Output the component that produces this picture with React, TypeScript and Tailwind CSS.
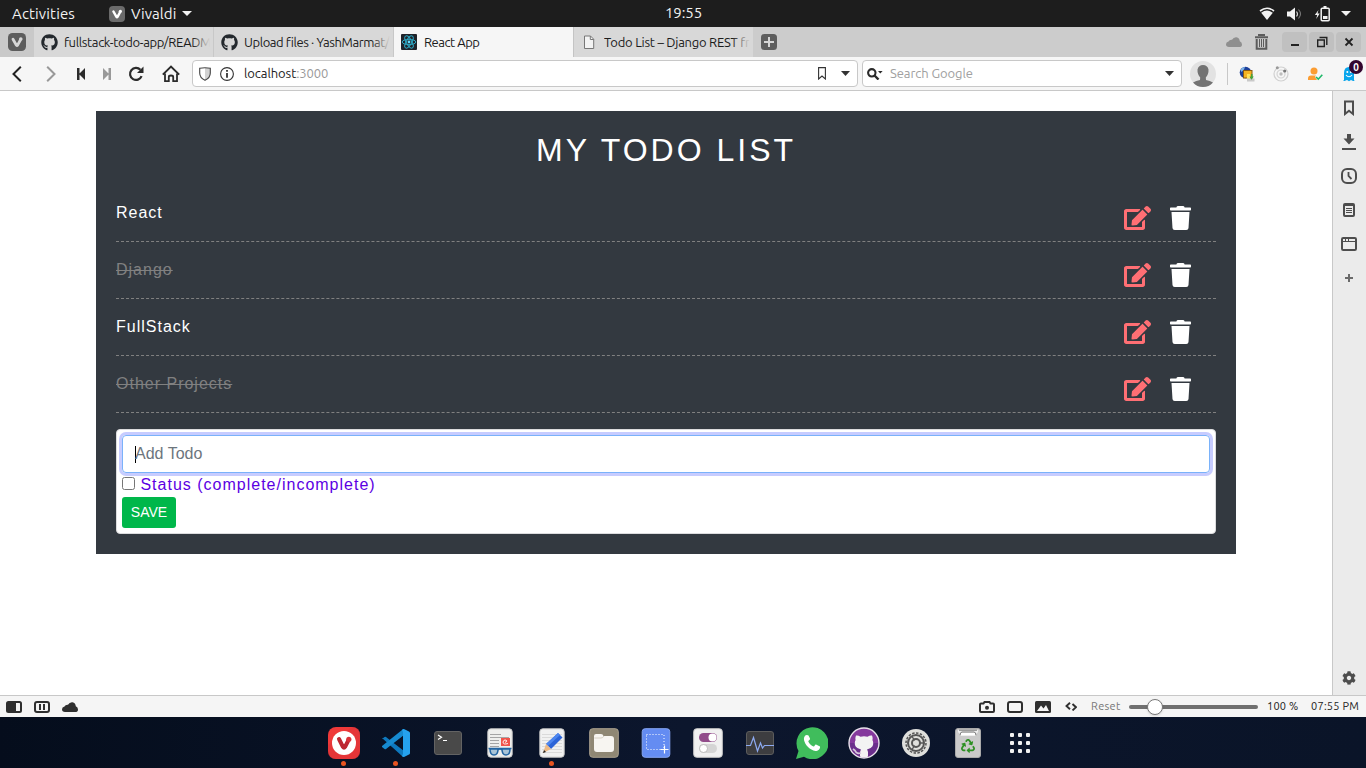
import React, { useState } from "react";
import { FaEdit, FaTrash, FaGithub, FaRecycle, FaCog } from "react-icons/fa";

type IconProps = { w: number; h: number; className?: string; children: React.ReactNode };

function Svg({ w, h, className = "", children }: IconProps) {
  return (
    <svg width={w} height={h} viewBox={`0 0 ${w} ${h}`} fill="none" className={`block shrink-0 ${className}`}>
      {children}
    </svg>
  );
}

function Cell({ className = "w-[34px]", children }: { className?: string; children: React.ReactNode }) {
  return <div className={`flex shrink-0 items-center justify-center ${className}`}>{children}</div>;
}

function VivaldiMark({ size, bg, fg }: { size: number; bg: string; fg: string }) {
  return (
    <svg width={size} height={size} viewBox="0 0 18 18" className="block shrink-0">
      <rect width="18" height="18" rx="4.5" fill={bg} />
      <path d="M5 6.2 L8.4 12.2 Q9 13 9.6 12.2 L12.4 7" stroke={fg} strokeWidth="2.8" strokeLinecap="round" strokeLinejoin="round" fill="none" />
      <circle cx="12.8" cy="6" r="1.8" fill={fg} />
    </svg>
  );
}

function Caret({ w = 9, h = 5, color = "#333" }: { w?: number; h?: number; color?: string }) {
  return (
    <Svg w={w} h={h}>
      <path d={`M0 0H${w}L${w / 2} ${h}Z`} fill={color} />
    </Svg>
  );
}

function TopBar() {
  return (
    <header className="flex h-[27px] items-center bg-[#1d1d1d] text-[15px] text-[#f2f2f2]">
      <div className="w-[109px] pt-px pl-3 tracking-[0.15px]">Activities</div>
      <VivaldiMark size={16} bg="#6b6b6b" fg="#fff" />
      <span className="ml-1.5 w-[46px] pt-px tracking-[0.05px]">Vivaldi</span>
      <span className="ml-[5px]"><Caret w={10} h={5} color="#f2f2f2" /></span>
      <div className="ml-[473px] w-[40px] tracking-[-0.1px]">19:55</div>
      <div className="ml-auto flex items-center">
        <Svg w={16} h={14} className="mr-[12px]">
          <path d="M1 4Q8-1.5 15 4" stroke="#f2f2f2" strokeWidth="1.6" />
          <path d="M2.2 5.7Q8 1.5 13.8 5.7L8 13Z" fill="#f2f2f2" />
        </Svg>
        <Svg w={16} h={14} className="mr-[12px]">
          <path d="M0 4.5H3L8 .5V13.5L3 9.5H0Z" fill="#f2f2f2" />
          <path d="M9.5 4.5Q11.5 7 9.5 9.5" stroke="#d0d0d0" strokeWidth="1.2" />
          <path d="M11.5 2.5Q15.5 7 11.5 11.5" stroke="#777" strokeWidth="1.1" />
        </Svg>
        <Svg w={16} h={16} className="mr-[10px]">
          <path d="M3.5 4L-.2 9H2.2L1.2 13L4.7 7.5H2.5Z" fill="#f2f2f2" />
          <path d="M8.5 1h3" stroke="#f2f2f2" strokeWidth="2" />
          <rect x="6.2" y="2.2" width="8" height="12.5" rx="1" stroke="#f2f2f2" strokeWidth="1.5" />
          <rect x="8" y="10" width="4.5" height="3" fill="#f2f2f2" />
        </Svg>
        <span className="mr-[15px]"><Caret w={10} h={5} color="#f2f2f2" /></span>
      </div>
    </header>
  );
}

function ReactFavicon() {
  return (
    <Svg w={16} h={16}>
      <rect width="16" height="16" rx="1" fill="#20232a" />
      <g stroke="#2da8c4" strokeWidth="1">
        <ellipse cx="8" cy="8" rx="6.8" ry="2.7" />
        <ellipse cx="8" cy="8" rx="6.8" ry="2.7" transform="rotate(60 8 8)" />
        <ellipse cx="8" cy="8" rx="6.8" ry="2.7" transform="rotate(120 8 8)" />
      </g>
      <circle cx="8" cy="8" r="1.4" fill="#61dafb" />
    </Svg>
  );
}

function PageFavicon() {
  return (
    <Svg w={16} h={16}>
      <path d="M3.5 2H9.5L12.7 5.2V14.5H3.5Z" fill="#f3f3f3" stroke="#777" />
      <path d="M9.3 2V5.5H12.7" stroke="#777" />
    </Svg>
  );
}

const tabs = [
  { icon: <FaGithub size={17} color="#24292e" />, title: "fullstack-todo-app/README", tone: "w-[180px] bg-[#d8d8d8] border-r border-[#c8c8c8]", text: "tracking-[-0.35px]", fade: "from-[#d8d8d800] to-[#d8d8d8]" },
  { icon: <FaGithub size={17} color="#24292e" />, title: "Upload files · YashMarmat/", tone: "w-[180px] bg-[#d8d8d8] border-r border-[#c8c8c8]", text: "tracking-[-0.42px]", fade: "from-[#d8d8d800] to-[#d8d8d8]" },
  { icon: <ReactFavicon />, title: "React App", tone: "w-[179px] bg-[#f6f6f6]", text: "tracking-[-0.48px]", fade: "" },
  { icon: <PageFavicon />, title: "Todo List – Django REST fra", tone: "w-[180px] bg-[#d8d8d8] border-l border-[#c4c4c4]", text: "tracking-[-0.25px]", fade: "from-[#d8d8d800] to-[#d8d8d8]" },
];

function TabBar() {
  return (
    <div className="flex h-[30px] items-center bg-[#ccc]">
      <Cell className="h-full w-[34px] bg-[#c9c9c9]">
        <VivaldiMark size={18} bg="#5d5d5d" fg="#d6d6d6" />
      </Cell>
      {tabs.map((t) => (
        <div key={t.title} className={`flex h-full shrink-0 items-center overflow-hidden pl-[7px] ${t.tone}`}>
          <div className="flex w-[17px] shrink-0">{t.icon}</div>
          <div className="relative ml-[6px] w-[146px] overflow-hidden">
            <div className={`text-[13px] leading-[18px] whitespace-nowrap text-[#1c1c1c] ${t.text}`}>{t.title}</div>
            {t.fade && <div className={`absolute inset-y-0 right-0 w-[18px] bg-linear-to-r ${t.fade}`} />}
          </div>
        </div>
      ))}
      <Svg w={16} h={16} className="ml-[8px]">
        <rect width="16" height="16" rx="3.5" fill="#5e5e5e" />
        <path d="M8 3V13M3 8H13" stroke="#d6d6d6" strokeWidth="2" />
      </Svg>
      <div className="ml-auto flex items-center">
        <Svg w={16} h={10} className="mr-[13px]">
          <path d="M3 10Q0 10 0 7.3 0 5 2.5 4.6 3.5 2.5 6 2.8 7.5 0 10.5.3 13.5 1 13.8 4.3 16 5 16 7.4 16 10 13 10Z" fill="#8f8f8f" />
        </Svg>
        <Svg w={13} h={16} className="mr-[14px]">
          <path d="M4 2V1H9V2M0 3.2H13" stroke="#5c5c5c" strokeWidth="2" />
          <path d="M1.7 5V14.8H11.3V5" stroke="#5c5c5c" strokeWidth="2" />
          <path d="M4.5 5V13M6.5 5V13M8.5 5V13" stroke="#5c5c5c" strokeWidth="1" />
        </Svg>
        <div className="mr-[5px] flex gap-[2px]">
          {["min", "restore", "close"].map((k) => (
            <div key={k} className="flex h-5 w-[25px] items-center justify-center rounded-[4px] bg-[#c0c0c0]">
              <Svg w={12} h={12}>
                {k === "min" && <path d="M2 9H10" stroke="#222" strokeWidth="2" />}
                {k === "restore" && <path d="M1.7 4H8.3V10.5H1.7ZM3.5 1.5H10.8V9" stroke="#222" strokeWidth="1.4" />}
                {k === "close" && <path d="M2.5 2.5L9.5 9.5M9.5 2.5L2.5 9.5" stroke="#222" strokeWidth="1.8" />}
              </Svg>
            </div>
          ))}
        </div>
      </div>
    </div>
  );
}

function AddressBar() {
  return (
    <div className="flex h-[34px] items-center border-b border-[#c8c8c8] bg-[#f6f6f6]">
      <Cell>
        <Svg w={10} h={16}><path d="M8.8 .8L1.5 8L8.8 15.2" stroke="#222" strokeWidth="2" /></Svg>
      </Cell>
      <Cell>
        <Svg w={10} h={16}><path d="M1.2 .8L8.5 8L1.2 15.2" stroke="#999" strokeWidth="2" /></Svg>
      </Cell>
      <Cell className="w-[26px]">
        <Svg w={8} h={12}><path d="M0 0H2.5V12H0ZM8 0V12L2 6Z" fill="#2b2b2b" /></Svg>
      </Cell>
      <Cell className="w-[26px]">
        <Svg w={8} h={12}><path d="M8 0H5.5V12H8ZM0 0V12L6 6Z" fill="#999" /></Svg>
      </Cell>
      <Cell className="w-[34px] pr-[2px]">
        <Svg w={16} h={16}>
          <path d="M12.4 3.8A6 6 0 1 0 13.6 10.2" stroke="#2b2b2b" strokeWidth="2.2" />
          <path d="M15.5 .5V7H9Z" fill="#2b2b2b" />
        </Svg>
      </Cell>
      <Cell>
        <Svg w={18} h={18}>
          <path d="M.8 9.6L9 1.6L17.2 9.6" stroke="#2b2b2b" strokeWidth="2" />
          <path d="M3 8.5V16.2H6.8V12Q6.8 10.5 9 10.5Q11.2 10.5 11.2 12V16.2H15V8.5" stroke="#2b2b2b" strokeWidth="1.8" />
        </Svg>
      </Cell>
      <div className="ml-1 flex h-[27px] w-[666px] items-center rounded-[4px] border border-[#c8c8c8] bg-white pl-[6px]">
        <Svg w={12} h={14}>
          <path d="M6 1V13Q11 10.5 11.2 6.5V1.5Z" fill="#d2d2d2" />
          <path d="M.7 1.2Q6 .3 11.3 1.2V6Q11.3 10.8 6 13.3Q.7 10.8.7 6Z" stroke="#444" strokeWidth="1.1" />
        </Svg>
        <Svg w={14} h={14} className="ml-[9px]">
          <circle cx="7" cy="7" r="6.4" stroke="#333" strokeWidth="1.1" />
          <path d="M7 6V10.7M7 3V4.8" stroke="#333" strokeWidth="1.8" />
        </Svg>
        <div className="ml-[10px] pt-px text-[13px] tracking-[-0.08px] text-[#1c1c1c]">
          localhost<span className="text-[#999]">:3000</span>
        </div>
        <Svg w={8} h={13} className="mr-[15px] ml-auto">
          <path d="M.6 .6H7.4V12L4 9L.6 12Z" stroke="#333" strokeWidth="1.1" />
        </Svg>
        <span className="mr-[7px]"><Caret /></span>
      </div>
      <div className="ml-1 flex h-[27px] w-[320px] items-center rounded-[4px] border border-[#c8c8c8] bg-white pl-[4px]">
        <Svg w={16} h={12}>
          <circle cx="4.8" cy="4.8" r="3.7" stroke="#2b2b2b" strokeWidth="2.1" />
          <path d="M7.5 7.5L11.5 11.5" stroke="#2b2b2b" strokeWidth="2.4" />
          <path d="M11 3H15.6L13.3 5.6Z" fill="#2b2b2b" />
        </Svg>
        <span className="ml-[7px] pt-px text-[13px] tracking-[-0.08px] text-[#a0a0a0]">Search Google</span>
        <span className="mr-[7px] ml-auto"><Caret /></span>
      </div>
      <Svg w={26} h={26} className="ml-2">
        <circle cx="13" cy="13" r="13" fill="#e2e2e2" />
        <path d="M3 21.5Q6 19.5 10 19L10.2 16.5Q7.2 13 7.5 8.5Q8.5 4 13 4Q17.5 4 18.5 8.5Q18.8 13 15.8 16.5L16 19Q20 19.5 23 21.5Q19 26 13 26Q7 26 3 21.5Z" fill="#737373" />
      </Svg>
      <div className="mr-[2px] ml-[11px] h-[22px] w-px bg-[#c8c8c8]" />
      <Cell>
        <Svg w={16} h={16}>
          <circle cx="6.5" cy="6.5" r="5.8" fill="#1d3f99" />
          <path d="M1.5 4Q3 1 6 1L5 3.5L2.5 6Z" fill="#7eb4e8" />
          <rect x="4.5" y="4.5" width="8.5" height="7.5" fill="#f5b324" stroke="#8a5b12" />
          <path d="M8 8H11V14H8Z" fill="#ffe15c" />
          <path d="M8 12.5H15.5V15.5H8Z" fill="#c9c9c9" />
          <path d="M12 8V10.5H10.5L12.5 13.8L14.8 10.5H13.5V8Z" fill="#46a53c" />
        </Svg>
      </Cell>
      <Cell>
        <Svg w={16} h={16}>
          <circle cx="8" cy="8" r="7" stroke="#d0d0d0" strokeWidth="1.2" />
          <circle cx="8" cy="8" r="4" stroke="#d4d4d4" strokeWidth="1.2" />
          <circle cx="8" cy="8" r="1.7" fill="#bdbdbd" />
          <circle cx="11.7" cy="5" r="1.6" fill="#777" /><circle cx="4.3" cy="1.8" r="1.5" fill="#999" />
        </Svg>
      </Cell>
      <Cell>
        <Svg w={16} h={14}>
          <circle cx="7" cy="4" r="3.5" fill="#fb9d32" />
          <path d="M1 13V11.5Q1 8.5 4 8.5H9L8 10L10 13Z" fill="#fb9d32" />
          <path d="M9 10L11.3 12.2L15.3 7.7" stroke="#1eb868" strokeWidth="1.6" />
        </Svg>
      </Cell>
      <Cell className="relative h-full w-[34px]">
        <Svg w={14} h={16}>
          <path d="M2 14V7Q2 1 7 1Q12 1 12 7V14Q13.5 15 11 15L9 14L7 15.3L5 14L2.5 15Q.3 15 2 14Z" fill="#08a5ec" />
          <circle cx="5.3" cy="6" r="1" fill="#fff" /><circle cx="8.8" cy="6" r="1" fill="#fff" />
          <path d="M4 9Q7 12.4 10 9" stroke="#fff" strokeWidth="1.1" />
        </Svg>
        <div className="absolute top-[3px] left-[17px] flex size-[14px] items-center justify-center rounded-full bg-[#33062f] text-[10px] font-bold text-white">0</div>
      </Cell>
    </div>
  );
}

const todos = [
  { title: "React", done: false },
  { title: "Django", done: true },
  { title: "FullStack", done: false },
  { title: "Other Projects", done: true },
];

function TodoApp() {
  const [checked, setChecked] = useState(false);
  return (
    <main className="min-w-0 flex-1 bg-white pt-5 pl-24 font-['Liberation_Sans',Arial,sans-serif]">
      <section className="h-[443px] w-[1140px] bg-[#333940] px-5 pt-5 text-white">
        <h1 className="mb-4 text-center text-[32px] leading-[38px] tracking-[3px]">MY TODO LIST</h1>
        {todos.map((t) => (
          <div key={t.title} className="flex h-[57px] items-start border-b border-dashed border-[#808080]">
            <span className={`mt-4 text-[16px] leading-6 tracking-[1px] ${t.done ? "text-[#808080] line-through" : ""}`}>{t.title}</span>
            <FaEdit className="mt-[21px] ml-auto h-6 w-[27px] text-[#ff6f74]" />
            <FaTrash className="mt-[21px] mr-[25px] ml-[19px] h-6 w-[21px]" />
          </div>
        ))}
        <form className="mt-4 h-[105px] rounded-[4px] border border-[#dcdcde] bg-white p-[5px]" onSubmit={(e) => e.preventDefault()}>
          <div className="flex h-[38px] items-center rounded-[4px] border border-[#7ab2fa] pl-[12px] shadow-[0_0_0_3px_#c7ccff]">
            <div className="h-[17px] w-px bg-black" />
            <span className="-ml-px text-[16px] text-[#6c757d]">Add Todo</span>
          </div>
          <label className="flex h-6 items-center text-[16px] leading-6 tracking-[1px] text-[#5b00e3]">
            <input type="checkbox" checked={checked} onChange={() => setChecked(!checked)} className="mr-[5.45px] mb-[3px] size-[13px]" />
            Status (complete/incomplete)
          </label>
          <button className="block h-[31px] w-[54px] rounded-[3px] bg-[#00b74a] text-[14px] text-white">SAVE</button>
        </form>
      </section>
    </main>
  );
}

function SidePanel() {
  return (
    <aside className="flex w-[34px] shrink-0 flex-col border-l border-[#c8c8c8] bg-[#ebebeb] pr-px">
      <Cell className="h-[34px]">
        <Svg w={12} h={16}><path d="M2 1.5H10V14L6 10.8L2 14Z" stroke="#4d4d4d" strokeWidth="2" /></Svg>
      </Cell>
      <Cell className="h-[34px]">
        <Svg w={14} h={16}><path d="M5 0H9V4.5H12.5L7 10.5L1.5 4.5H5ZM0 14H14V16H0Z" fill="#4d4d4d" /></Svg>
      </Cell>
      <Cell className="h-[34px]">
        <Svg w={16} h={16}>
          <rect x="1" y="1" width="14" height="14" rx="5" stroke="#4d4d4d" strokeWidth="2" />
          <path d="M7.5 4V8L10.5 11" stroke="#4d4d4d" strokeWidth="1.8" />
        </Svg>
      </Cell>
      <Cell className="h-[34px]">
        <Svg w={12} h={14}>
          <rect x="1" y="1" width="10" height="12" rx="1" stroke="#4d4d4d" strokeWidth="2" />
          <path d="M2 1.5H10" stroke="#4d4d4d" strokeWidth="3" />
          <path d="M3 5.5H9M3 7.5H9M3 9.5H9" stroke="#4d4d4d" />
        </Svg>
      </Cell>
      <Cell className="h-[34px]">
        <Svg w={16} h={14}>
          <rect x="1" y="1" width="14" height="12" rx="1.2" stroke="#4d4d4d" strokeWidth="2" />
          <path d="M1 4.5H15M4.5 1V4M7.5 1V4" stroke="#4d4d4d" strokeWidth="1" />
        </Svg>
      </Cell>
      <Cell className="h-[34px]">
        <Svg w={8} h={8}><path d="M4 0V8M0 4H8" stroke="#6a6a6a" strokeWidth="2" /></Svg>
      </Cell>
      <Cell className="mt-auto h-[34px]"><FaCog size={14} color="#4d4d4d" /></Cell>
    </aside>
  );
}

function StatusBar() {
  return (
    <div className="flex h-[22px] items-center border-t border-[#c8c8c8] bg-[#f5f5f5] text-[11px] text-[#222]">
      <Cell className="w-[28px]">
        <Svg w={16} h={12}><rect x="1" y="1" width="14" height="10" rx="1.5" stroke="#2f2f2f" strokeWidth="2" /><path d="M1 1H10V11H1Z" fill="#2f2f2f" /></Svg>
      </Cell>
      <Cell className="w-[28px]">
        <Svg w={16} h={12}><rect x="1" y="1" width="14" height="10" rx="2" stroke="#2f2f2f" strokeWidth="2" /><path d="M6 3V9M10 3V9" stroke="#2f2f2f" strokeWidth="2" /></Svg>
      </Cell>
      <Cell className="w-[28px]">
        <Svg w={16} h={10}><path d="M3 10Q0 10 0 7.3 0 5 2.5 4.6 3.5 2.5 6 2.8 7.5 0 10.5.3 13.5 1 13.8 4.3 16 5 16 7.4 16 10 13 10Z" fill="#2f2f2f" /></Svg>
      </Cell>
      <div className="ml-auto flex items-center">
        <Cell className="w-[28px]">
          <Svg w={16} h={12}><path d="M1 3.5Q1 2.5 2 2.5H4.5L5.5 1H10.5L11.5 2.5H14Q15 2.5 15 3.5V10Q15 11 14 11H2Q1 11 1 10Z" stroke="#2f2f2f" strokeWidth="2" /><circle cx="8" cy="6.8" r="2" fill="#2f2f2f" /></Svg>
        </Cell>
        <Cell className="w-[28px]">
          <Svg w={16} h={12}><rect x="1" y="1" width="14" height="10" rx="2" stroke="#2f2f2f" strokeWidth="2" /></Svg>
        </Cell>
        <Cell className="w-[28px]">
          <Svg w={16} h={12}><rect width="16" height="12" rx="1.5" fill="#2f2f2f" /><path d="M2 10L6 4.5L8.5 7.5L11 4L14 10Z" fill="#f5f5f5" /></Svg>
        </Cell>
        <Cell className="w-[28px]">
          <Svg w={12} h={9}><path d="M5 .8L1.5 4L5 7.2M7.5 2L11 5.2L7.5 8.4" stroke="#2f2f2f" strokeWidth="1.9" /></Svg>
        </Cell>
        <span className="ml-[6px] w-[38px] tracking-[0.3px] text-[#777]">Reset</span>
        <div className="relative h-1 w-[129px] rounded-full bg-[#707070]">
          <div className="absolute -top-[6px] left-[18px] size-4 rounded-full border border-[#777] bg-white shadow-sm" />
        </div>
        <span className="ml-[9px] w-[44px] tracking-[0.2px] whitespace-nowrap">100 %</span>
        <span className="w-[55px] tracking-[0.25px] whitespace-nowrap">07:55 PM</span>
      </div>
    </div>
  );
}

const dock: { name: string; running?: boolean; icon: React.ReactNode }[] = [
  {
    name: "vivaldi", running: true, icon: (
      <Svg w={32} h={32}>
        <rect width="32" height="32" rx="8" fill="#ef3939" />
        <path d="M0 18L24 0Q32 0 32 8V24Q32 32 24 32H8Q0 32 0 24Z" fill="#dc3138" opacity=".5" />
        <circle cx="16" cy="16" r="12" fill="#fff" />
        <path d="M11 12L15 20Q16 21.5 17 20L20.3 13.5" stroke="#bd2731" strokeWidth="4" strokeLinecap="round" strokeLinejoin="round" />
        <circle cx="20.8" cy="12.3" r="2.6" fill="#d93138" />
      </Svg>
    ),
  },
  {
    name: "code", running: true, icon: (
      <Svg w={28} h={28}>
        <path d="M0 10L2.5 8Q3.3 7.5 4 8L22 22V27.5Q21 28 20 27L0 9Z" fill="#0e78bd" />
        <path d="M0 18L2.5 20Q3.3 20.5 4 20L22 6V.5Q21 0 20 1L0 17Z" fill="#168ad0" />
        <path d="M20 1Q21-.3 22.5.3L27 2.5Q28 3 28 4V24Q28 25 27 25.5L22.5 27.7Q21 28.3 20 27L21 25V3Z" fill="#25a2ee" />
      </Svg>
    ),
  },
  {
    name: "terminal", icon: (
      <Svg w={28} h={24}>
        <rect x=".5" y=".5" width="27" height="23" rx="2.5" fill="#494949" stroke="#636363" />
        <path d="M4 4L7.5 6.2L4 8.4M9 9.5H13" stroke="#fff" strokeWidth="1.2" />
      </Svg>
    ),
  },
  {
    name: "reader", icon: (
      <Svg w={26} h={30}>
        <rect x=".8" y=".8" width="24.4" height="28.4" rx="3" fill="#efefed" stroke="#c4c4c4" />
        <path d="M3 6.5H14M3 9.5H22M3 12.5H12M3 15.5H12M3 18.5H12" stroke="#a5a5a5" />
        <rect x="14" y="10" width="9" height="8" fill="#f15349" />
        <path d="M21 15.5Q16 17 16 14Q16.5 11.5 19 12Q20.5 13 19 14.2L18 14" stroke="#fff" strokeWidth=".9" />
        <path d="M1.5 20.5H24.5M11 22Q13 20 15 22" stroke="#2465a2" strokeWidth="1.6" />
        <path d="M3 21H11Q11 27 7 27Q3 27 3 21ZM15 21H23Q23 27 19 27Q15 27 15 21Z" fill="#a9c4d7" stroke="#2465a2" strokeWidth="1.5" />
      </Svg>
    ),
  },
  {
    name: "editor", running: true, icon: (
      <Svg w={26} h={30}>
        <rect x=".8" y=".8" width="24.4" height="28.4" rx="3" fill="#f1f1f1" stroke="#c4c4c4" />
        <path d="M3 6.5H23M3 9.5H23M3 12.5H23M3 15.5H23M3 18.5H23M3 21.5H23M3 24.5H23" stroke="#dadada" />
        <path d="M19 5L23.5 9.5L12 21L7 16Z" fill="#2c64d8" />
        <path d="M19 5L21 7L9 18L7 16Z" fill="#4d86ef" />
        <path d="M7 16L12 21L4 25Z" fill="#edba86" />
        <path d="M5 22L7 24L4 25Z" fill="#222" />
      </Svg>
    ),
  },
  {
    name: "files", icon: (
      <Svg w={30} h={30}>
        <rect x=".7" y=".7" width="28.6" height="28.6" rx="3" fill="#8f8774" stroke="#aaa18e" />
        <path d="M5 21V8Q5 6 7 6H12Q14 6 14.5 8H22Q25 8 25 11V21Q25 24 22 24H8Q5 24 5 21Z" fill="#f7f5f1" />
        <path d="M5.3 10H12Q14 10 15 8" stroke="#d6d0c5" />
      </Svg>
    ),
  },
  {
    name: "screenshot", icon: (
      <Svg w={30} h={30}>
        <rect x="1.2" y=".7" width="27.6" height="28.6" rx="3" fill="#648cf2" stroke="#86a5f4" />
        <path d="M5.5 6.5H23V21.5H5.5Z" stroke="#fff" strokeDasharray="1 2" />
        <path d="M23.5 17.5V25.5M19.5 21.5H27.5" stroke="#fff" strokeWidth="1.2" />
      </Svg>
    ),
  },
  {
    name: "tweaks", icon: (
      <Svg w={30} h={30}>
        <rect x=".7" y=".7" width="28.6" height="28.6" rx="3" fill="#f0f0f0" stroke="#c9c9c9" />
        <rect x="6" y="5" width="18" height="9" rx="4.5" fill="#924d8b" />
        <circle cx="19.5" cy="9.5" r="4" fill="#fff" />
        <rect x="6" y="16" width="18" height="9" rx="4.5" fill="#d5d5d5" />
        <circle cx="10.5" cy="20.5" r="4" fill="#fff" stroke="#aaa" strokeWidth=".7" />
      </Svg>
    ),
  },
  {
    name: "monitor", icon: (
      <Svg w={28} h={24}>
        <rect x=".5" y=".5" width="27" height="23" rx="2.5" fill="#3d3d40" stroke="#5c5c5c" />
        <path d="M0 14.5H4.5L7.5 6.5L11.5 20L14.5 12L16.5 17L18.5 14.5H28" stroke="#8daaf2" strokeWidth="1.2" />
      </Svg>
    ),
  },
  {
    name: "whatsapp", icon: (
      <Svg w={32} h={32}>
        <path d="M0 32L2.5 24A16 16 0 1 1 8 29.8Z" fill="#40bd5c" />
        <path d="M11 8C9 8 7.5 10 8 13C9 18 14 23 19.5 24C22 24 24.5 22 24 19.5L20 17.5C19 17 18.5 20 17.5 19.5C15.5 18.8 13 16.3 12.3 14.5C12.2 13.5 14.5 12.8 14 11.5L12.5 8.5Z" fill="#fff" />
      </Svg>
    ),
  },
  {
    name: "github", icon: (
      <Svg w={32} h={32}>
        <defs><clipPath id="cat"><circle cx="16" cy="16" r="14.2" /></clipPath></defs>
        <circle cx="16" cy="16" r="15" fill="#85399d" stroke="#e8e3eb" strokeWidth="1.4" />
        <path d="M2 16A14 14 0 0 0 30 16Z" fill="#6b308c" />
        <g clipPath="url(#cat)" fill="#f3f3f3">
          <path d="M8 8.5Q10 8 12.5 9.7Q16 8.8 19.5 9.7Q22 8 24 8.5Q25 11 24.4 13Q26 16 24.5 19.3Q22.8 22 19 22.5Q20.2 24 20 26V32H12V26Q12 24 13 22.5Q9.2 22 7.5 19.3Q6 16 7.6 13Q7 11 8 8.5Z" />
          <path d="M13 26Q8.5 27.5 7 23.5L5 22" fill="none" stroke="#d7c9dc" strokeWidth="1.7" />
        </g>
      </Svg>
    ),
  },
  {
    name: "settings", icon: (
      <Svg w={30} h={30}>
        <circle cx="15" cy="15" r="14" fill="#dfdfdc" />
        <circle cx="15" cy="15" r="10" stroke="#555" strokeWidth="1.5" strokeDasharray="2.5 1.4" />
        <circle cx="15" cy="15" r="8" stroke="#555" strokeWidth="2" />
        <circle cx="15" cy="15" r="4" stroke="#555" strokeWidth="2" />
        <path d="M18 15H23M13.5 12.5L10.8 8M13.5 17.5L10.8 22" stroke="#555" strokeWidth="1.4" />
      </Svg>
    ),
  },
  {
    name: "trash", icon: (
      <div className="flex h-[30px] w-[26px] flex-col items-center rounded-[3px] border border-[#aaa] bg-[#cacaca]">
        <Svg w={22} h={8}>
          <path d="M1 1H21V3Q18 6 20 7H2Q4 6 1 3Z" fill="#eee" />
          <path d="M2 1.2H20M3 6.5Q3 3 5 3H17Q19 3 19 6.5" stroke="#777" />
          <path d="M4 5H18" stroke="#fff" strokeWidth="2" />
        </Svg>
        <FaRecycle size={14} color="#2d9023" className="mt-[2px]" />
      </div>
    ),
  },
  {
    name: "apps", icon: (
      <div className="grid grid-cols-3 gap-1">
        {Array.from({ length: 9 }, (_, i) => <div key={i} className="size-1 rounded-[1px] bg-[#f2f2f2]" />)}
      </div>
    ),
  },
];

function Dock() {
  return (
    <footer className="flex h-[51px] bg-linear-to-r from-[#050d1c] via-[#0c162d] to-[#0a1428] pl-[318px]">
      {dock.map((d) => (
        <div key={d.name} className="relative flex w-[52px] shrink-0 items-center justify-center pt-px">
          {d.icon}
          {d.running && <div className="absolute top-[44px] left-[23px] size-[5px] rounded-full bg-[#e95420]" />}
        </div>
      ))}
    </footer>
  );
}

export default function App() {
  return (
    <div className="flex h-[768px] w-[1366px] flex-col overflow-hidden bg-white font-['Ubuntu','Noto_Sans',sans-serif]">
      <TopBar />
      <TabBar />
      <AddressBar />
      <div className="flex min-h-0 flex-1">
        <TodoApp />
        <SidePanel />
      </div>
      <StatusBar />
      <Dock />
    </div>
  );
}
